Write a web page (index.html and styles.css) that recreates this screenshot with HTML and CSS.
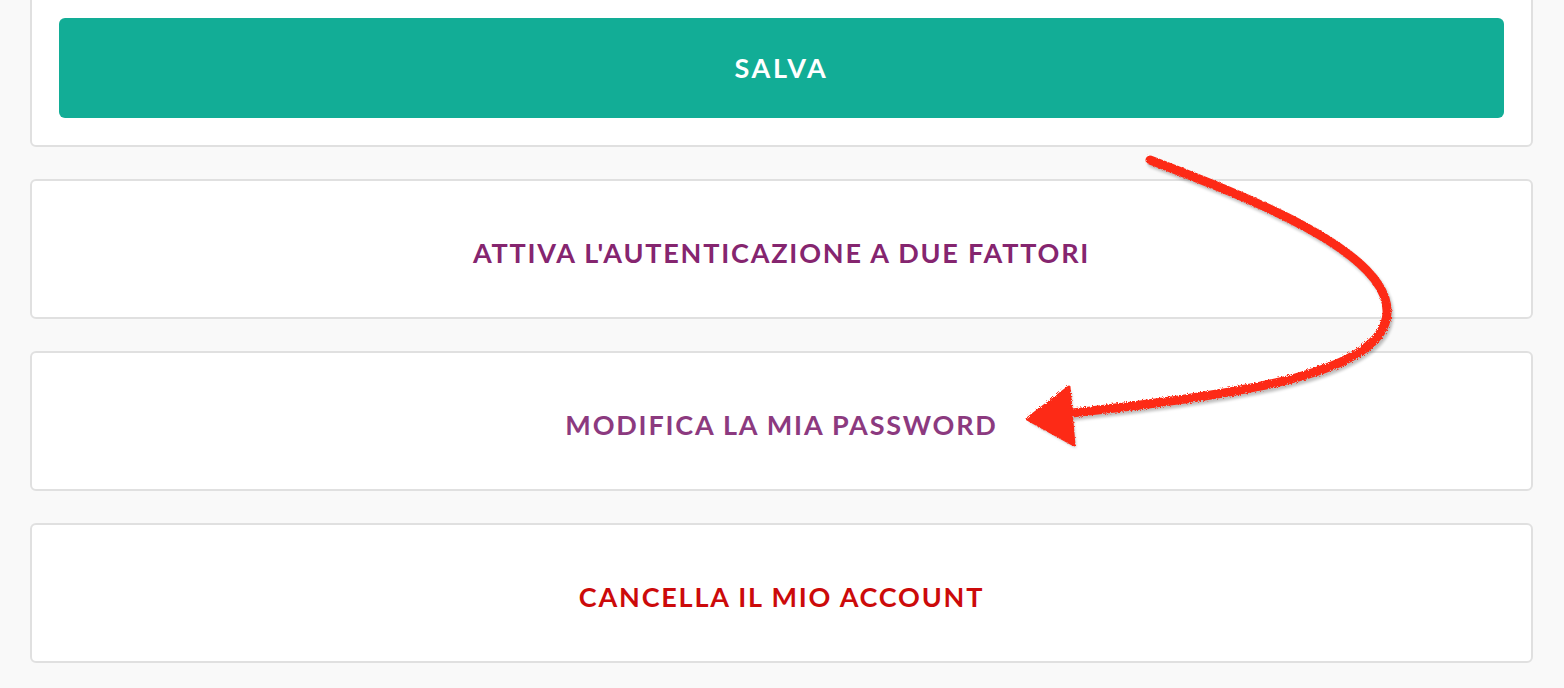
FILE: index.html
```html
<html>
<head>
    <title>Impostazioni account</title>
    <link rel="stylesheet" href="styles.css">
</head>
<body>
    <div class="page">
        <div class="card card-top">
            <button class="btn-save">SALVA</button>
        </div>

        <div class="card">
            <a class="link purple" href="#">ATTIVA L'AUTENTICAZIONE A DUE FATTORI</a>
        </div>

        <div class="card">
            <a class="link violet" href="#">MODIFICA LA MIA PASSWORD</a>
        </div>

        <div class="card">
            <a class="link red" href="#">CANCELLA IL MIO ACCOUNT</a>
        </div>
    </div>

    <svg class="arrow" width="1564" height="688" viewBox="0 0 1564 688">
        <defs>
            <filter id="chalk" x="-10%" y="-10%" width="120%" height="120%">
                <feTurbulence type="fractalNoise" baseFrequency="1.2" numOctaves="2" result="noise"/>
                <feDisplacementMap in="SourceGraphic" in2="noise" scale="4"/>
            </filter>
            <filter id="shade" x="-10%" y="-10%" width="120%" height="120%">
                <feGaussianBlur stdDeviation="1.5"/>
            </filter>
        </defs>
        <g class="arrow-shadow" filter="url(#shade)" transform="translate(2,3)">
            <path d="M1150,160 C1250,198 1390,252 1387,313 C1384,372 1250,394 1072,413" fill="none" stroke="#000" stroke-width="9" stroke-linecap="round"/>
            <path d="M1027,419 L1069,387 L1074,445 Z" fill="#000"/>
        </g>
        <g filter="url(#chalk)">
            <path d="M1150,160 C1250,198 1390,252 1387,313 C1384,372 1250,394 1072,413" fill="none" stroke="#fd2a17" stroke-width="9" stroke-linecap="round"/>
            <path d="M1027,419 L1069,387 L1074,445 Z" fill="#fd2a17" stroke="#fd2a17" stroke-width="3" stroke-linejoin="round"/>
        </g>
    </svg>
</body>
</html>
```

FILE: styles.css
```css
* {
    margin: 0px;
    padding: 0px;
    box-sizing: border-box;
}

body
{
    background-color: #f9f9f9;
    font-family: Lato, "Open Sans", sans-serif;
    overflow: hidden;
}

.page
{
    display: flex;
    flex-direction: column;
    gap: 32px;
    padding: 0 31px 0 30px;
    margin-top: -11px;
}

.card
{
    background-color: #ffffff;
    border: 2px solid #e0e0e0;
    border-radius: 6px;
    height: 140px;
    padding-top: 6px;
    display: flex;
    align-items: center;
    justify-content: center;
}

.card-top
{
    height: auto;
    padding: 27px;
}

.btn-save
{
    width: 100%;
    height: 100px;
    border: none;
    border-radius: 6px;
    background-color: #12ad96;
    color: #ffffff;
    font-family: Lato, "Open Sans", sans-serif;
    font-size: 27px;
    font-weight: 700;
    letter-spacing: 2.6px;
    padding-bottom: 2px;
}

.link
{
    text-decoration: none;
    font-size: 27px;
    font-weight: 700;
    letter-spacing: 1.8px;
}

.purple
{
    color: #85256f;
}

.violet
{
    color: #8c3a7f;
}

.red
{
    color: #cc0a0a;
}

.arrow
{
    position: absolute;
    left: 0;
    top: 0;
    pointer-events: none;
}

.arrow-shadow
{
    opacity: 0.25;
}
```
